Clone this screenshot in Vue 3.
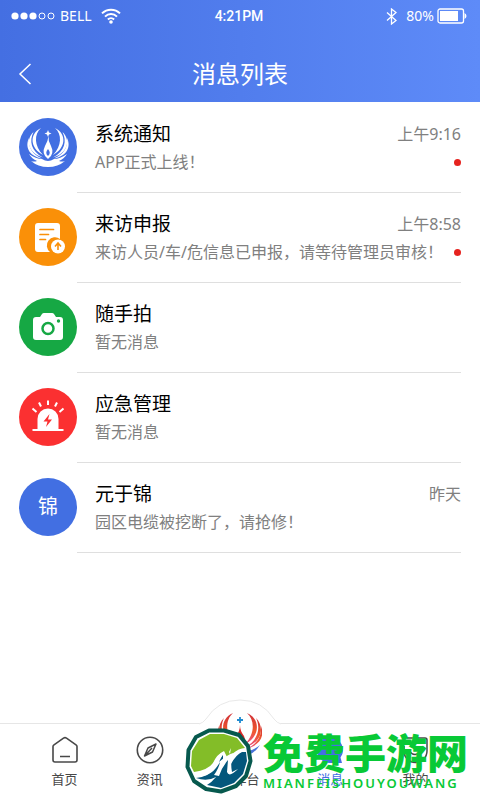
<script setup>
const messages = [
  { id: 1, icon: 'logo', tone: 'blue', title: '系统通知', preview: 'APP正式上线！', time: '上午9:16', unread: true },
  { id: 2, icon: 'report', tone: 'orange', title: '来访申报', preview: '来访人员/车/危信息已申报，请等待管理员审核！', time: '上午8:58', unread: true },
  { id: 3, icon: 'camera', tone: 'green', title: '随手拍', preview: '暂无消息', time: '', unread: false },
  { id: 4, icon: 'alarm', tone: 'red', title: '应急管理', preview: '暂无消息', time: '', unread: false },
  { id: 5, icon: '', tone: 'blue', title: '元于锦', preview: '园区电缆被挖断了，请抢修！', time: '昨天', unread: false }
]
</script>

<template>
  <div class="page">
    <header class="top">
      <div class="status">
        <div class="carrier">
          <svg class="signal" viewBox="0 0 45 8" aria-hidden="true">
            <g fill="#fff"><circle cx="4" cy="4" r="3.6" /><circle cx="13" cy="4" r="3.6" /><circle cx="22" cy="4" r="3.6" /></g>
            <g fill="none" stroke="#fff" stroke-width="1"><circle cx="31" cy="4" r="3" /><circle cx="40" cy="4" r="3" /></g>
          </svg>
          <span>BELL</span>
          <svg class="wifi" viewBox="0 0 20 16" aria-hidden="true">
            <g fill="none" stroke="#fff" stroke-width="2">
              <path d="M1 5.4a12.7 12.7 0 0 1 18 0" /><path d="M4 8.6a8.5 8.5 0 0 1 12 0" /><path d="M6.9 11.5a4.4 4.4 0 0 1 6.2 0" />
            </g>
            <circle cx="10" cy="14" r="1.8" fill="#fff" />
          </svg>
        </div>
        <span class="clock">4:21PM</span>
        <div class="power">
          <svg class="bluetooth" viewBox="0 0 11 17" aria-hidden="true">
            <path d="M1 4.500l9 8L5.500 16V1L10 4.500l-9 8" fill="none" stroke="#fff" stroke-width="1.300" />
          </svg>
          <span>80%</span>
          <svg class="battery" viewBox="0 0 30 16" aria-hidden="true">
            <rect x="1" y="1" width="25.500" height="14" rx="2" fill="none" stroke="#fff" stroke-width="1.300" />
            <rect x="3" y="3" width="18" height="10" fill="#fff" />
            <path d="M27.500 5q2 1 2 3t-2 3z" fill="#fff" />
          </svg>
        </div>
      </div>
      <div class="bar">
        <button class="back" type="button" aria-label="返回">
          <svg viewBox="0 0 14 22" aria-hidden="true"><path d="M12.500 1L2 11l10.500 10" fill="none" stroke="#fff" stroke-width="1.500" /></svg>
        </button>
        <h1>消息列表</h1>
      </div>
    </header>

    <main>
      <ul class="list">
        <li v-for="m in messages" :key="m.id" class="row">
          <div class="avatar" :class="m.tone">
            <svg v-if="m.icon === 'logo'" viewBox="0 0 58 58" aria-hidden="true">
              <g fill="#fff">
                <path d="M22 10C15 16 15 28 24 37C11 30 10 16 22 10Z" />
                <path d="M14.500 14C10 23 12 33 24 39.500C9 35 6 22 14.500 14Z" />
                <path d="M10 20C9 29 13 36 23 40.500C9 38 6 28 10 20Z" />
                <path d="M36 10C43 16 43 28 34 37C47 30 48 16 36 10Z" />
                <path d="M43.500 14C48 23 46 33 34 39.500C49 35 52 22 43.500 14Z" />
                <path d="M48 20C49 29 45 36 35 40.500C49 38 52 28 48 20Z" />
                <path d="M10 36Q17 41 23 41Q29 45 35 41Q41 41 48 36Q45 41 40 43Q43 44 46 43Q39 49 29 49Q19 49 12 43Q15 44 18 43Q13 41 10 36Z" />
                <path fill-rule="evenodd" d="M29.500 18Q29 23 32 28Q36 36 29 41Q22 36 26 28Q29 23 29.500 18ZM29 31Q25.500 35 29 38Q32.500 35 29 31Z" />
                <path d="M29 12l1 2.500 2.500 1-2.500 1-1 2.500-1-2.500-2.500-1 2.500-1z" />
              </g>
            </svg>
            <svg v-else-if="m.icon === 'report'" viewBox="0 0 58 58" aria-hidden="true">
              <path d="M19 15h19q3 0 3 3v13a8 8 0 0 0-10 13H19q-3 0-3-3V18q0-3 3-3z" fill="#fff" />
              <path d="M21 21.500h13.500M21 26.500h8.500M21 31.500h5.500" stroke="#fa9008" stroke-width="1.700" stroke-linecap="round" />
              <circle cx="39" cy="38.500" r="7" fill="#fff" />
              <path d="M39 42v-6M36 38.500l3-3.500 3 3.500" fill="none" stroke="#fa9008" stroke-width="1.600" />
            </svg>
            <svg v-else-if="m.icon === 'camera'" viewBox="0 0 58 58" aria-hidden="true">
              <path d="M17 19h4l2-3q.6-1 2-1h8q1.400 0 2 1l2 3h4q3 0 3 3v17q0 3-3 3H17q-3 0-3-3V22q0-3 3-3z" fill="#fff" />
              <circle cx="29" cy="30.500" r="5.500" fill="none" stroke="#16a844" stroke-width="2.500" />
              <circle cx="39.500" cy="23" r="1.700" fill="#16a844" />
            </svg>
            <svg v-else-if="m.icon === 'alarm'" viewBox="0 0 58 58" aria-hidden="true">
              <path d="M18.500 41V31a10.500 10.500 0 0 1 21 0v10h4q1.300 0 1.300 1t-1.300 1h-29q-1.300 0-1.300-1t1.300-1z" fill="#fff" />
              <path d="M29 12.500v4.500M20 14.500l2 4M38 14.500l-2 4M13.500 20.500l4 3.500M44.500 20.500l-4 3.500" stroke="#fff" stroke-width="2" />
              <path d="M30.500 26l-6 7.500h4l-1.500 5.500 6-7.500h-4z" fill="#fb3031" />
            </svg>
            <span v-else>锦</span>
          </div>
          <div class="body">
            <div class="line">
              <h2>{{ m.title }}</h2>
              <time v-if="m.time">{{ m.time }}</time>
            </div>
            <div class="line">
              <p>{{ m.preview }}</p>
              <i v-if="m.unread" class="dot"></i>
            </div>
          </div>
        </li>
      </ul>
    </main>

    <footer class="bottom">
      <nav class="tabs">
        <a class="tab" href="#home">
          <svg viewBox="0 0 28 28" aria-hidden="true">
            <path d="M2 10.500Q2 9.500 3 8.800L12.500 2.100Q14 1.100 15.500 2.100L25 8.800Q26 9.500 26 10.500V24q0 2-2 2H4q-2 0-2-2zM9 20.500h10" fill="none" stroke="#484848" stroke-width="1.600" />
          </svg>
          <span>首页</span>
        </a>
        <a class="tab" href="#news">
          <svg viewBox="0 0 28 28" aria-hidden="true">
            <circle cx="14" cy="14" r="12.700" fill="none" stroke="#484848" stroke-width="1.600" />
            <path d="M20 8l-3.500 8L8.500 20l3.500-8zM16 12L9 19.500" fill="none" stroke="#484848" stroke-width="1.500" stroke-linejoin="round" />
          </svg>
          <span>资讯</span>
        </a>
        <a class="tab center" href="#workbench">
          <svg class="bump" viewBox="0 0 82 44" aria-hidden="true">
            <path d="M0 25Q4 24 7 20Q19 1 41 1T75 20Q78 24 82 25V44H0z" fill="#fff" />
            <path d="M0 25Q4 24 7 20Q19 1 41 1T75 20Q78 24 82 25" fill="none" stroke="#e9e9e9" />
          </svg>
          <svg class="emblem" viewBox="0 0 44 46" aria-hidden="true">
            <defs>
              <linearGradient id="wing" x1="0" y1="0" x2="0" y2="1"><stop offset="0" stop-color="#cf2f38" /><stop offset=".6" stop-color="#f0592d" /><stop offset="1" stop-color="#e84a87" /></linearGradient>
            </defs>
            <g fill="url(#wing)">
              <path d="M15 0C7 7 7 21 17 31C2 24 1 6 15 0Z" /><path d="M6 5C1 15 4 28 17 34C0 30-3 14 6 5Z" /><path d="M1 13C0 23 5 32 17 36C2 33-3 23 1 13Z" />
              <path d="M29 0C37 7 37 21 27 31C42 24 43 6 29 0Z" /><path d="M38 5C43 15 40 28 27 34C44 30 47 14 38 5Z" /><path d="M43 13C44 23 39 32 27 36C42 33 47 23 43 13Z" />
            </g>
            <path d="M22 12Q22 18 26 23Q30 31 22 37Q14 31 18 23Q22 18 22 12Z" fill="#dd2725" />
            <path d="M22 4v6M19 7h6" stroke="#218bd0" stroke-width="1.800" />
            <path d="M2 32Q14 40 22 39Q34 39 42 32Q36 41 30 42Q22 47 14 42Q7 40 2 32Z" fill="#4874d8" />
          </svg>
          <span>工作台</span>
        </a>
        <a class="tab active" href="#messages" aria-current="page">
          <svg viewBox="0 0 28 28" aria-hidden="true">
            <path d="M14 1a13 13 0 0 1 10.500 20.500l1.500 5.500H14A13 13 0 0 1 14 1z" fill="#456fe2" />
          </svg>
          <span>消息</span>
        </a>
        <a class="tab" href="#mine">
          <svg viewBox="0 0 28 28" aria-hidden="true">
            <path d="M6 2h18q2 0 2 2v11a11.500 11.500 0 0 1-23 0V10M9 16q5 5 10 0" fill="none" stroke="#484848" stroke-width="1.500" />
          </svg>
          <span>我的</span>
        </a>
      </nav>
      <div class="mark">
        <svg class="badge" viewBox="0 0 68 66" aria-hidden="true">
          <path d="M24 2.500L39 2.500L54 7L63 18L65.500 33L61 48L51 58L36 63.500L21 61L9 53L2.500 39L3.500 22L11 9Z" fill="#fff" stroke="#07594e" stroke-width="4" stroke-linejoin="round" />
          <path d="M25 6L39 6L52 10L60 20Q54 20 47 26L43 31L39 23Q32 26 28 35Q23 42 9 44L6 38L7 23L14 12Z" fill="#83bd28" />
          <path d="M11 50Q24 49 31 38Q34 31 38 27L38 33L33 44Q41 32 46 28L44 40Q50 27 57 24L61 24L62 33L58 46L49 55L36 60L22 57Q27 54 31 49Q22 54 11 50Z" fill="#04577c" />
          <path d="M9 47Q22 46 29 34Q33 27 38 24Q37 29 34 34Q42 27 48 25Q45 33 47 44L53 41Q44 50 42 44L43 32Q37 39 34 48L29 47Q34 40 35 34Q25 52 9 47Z" fill="#fff" />
          <path d="M44 24l2-4-1 6z" fill="#fff" />
        </svg>
        <div class="words">
          <strong>免费手游网</strong>
          <small>MIANFEISHOUYOUWANG</small>
        </div>
      </div>
    </footer>
  </div>
</template>

<style>
body {
  margin: 0;
  background: #fff;
}
</style>

<style scoped>
.page {
  display: flex;
  flex-direction: column;
  min-height: 100vh;
  overflow: hidden;
  font-family: "Noto Sans", "Noto Sans CJK SC", sans-serif;
  color: #000;
}
svg {
  display: block;
  flex: none;
}
h1, h2, p, ul {
  margin: 0;
  padding: 0;
  font-weight: 400;
}
.top {
  background: linear-gradient(90deg, #446fe2, #5e8bf8);
  color: #fff;
}
.status {
  display: grid;
  grid-template-columns: 1fr auto 1fr;
  align-items: center;
  height: 32px;
  padding: 0 13px 0 11px;
  font-size: 14px;
  line-height: 20px;
}
.carrier, .power {
  display: flex;
  align-items: center;
}
.carrier {
  gap: 4px;
}
.signal {
  width: 45px;
  height: 8px;
}
.wifi {
  width: 20px;
  height: 16px;
  margin-left: 5px;
}
.clock {
  font-family: Roboto, sans-serif;
  font-weight: 500;
}
.power {
  justify-content: flex-end;
  gap: 3px;
}
.bluetooth {
  width: 11px;
  height: 17px;
  margin-right: 6px;
}
.battery {
  width: 30px;
  height: 16px;
}
.bar {
  display: grid;
  grid-template-columns: 48px 1fr 48px;
  align-items: center;
  padding: 24px 0 10px;
}
.bar h1 {
  font-size: 24px;
  line-height: 36px;
  text-align: center;
}
.back {
  padding: 0 0 0 18px;
  border: 0;
  background: none;
  cursor: pointer;
}
.back svg {
  width: 14px;
  height: 22px;
}
.list {
  padding-top: 1px;
  list-style: none;
}
.row {
  display: flex;
  box-sizing: border-box;
  height: 90px;
  padding: 0 19px;
}
.avatar {
  display: flex;
  flex: none;
  align-items: center;
  justify-content: center;
  width: 58px;
  height: 58px;
  margin-top: 15px;
  border-radius: 50%;
  color: #fff;
  font-size: 20px;
  line-height: 28px;
}
.avatar svg {
  width: 58px;
  height: 58px;
}
.blue { background: #426fe2; }
.orange { background: #fa9008; }
.green { background: #16a844; }
.red { background: #fb3031; }
.body {
  flex: 1;
  min-width: 0;
  padding: 17px 0 0 18px;
  border-bottom: 1px solid #dfdfdf;
}
.line {
  display: flex;
  align-items: center;
  justify-content: space-between;
  height: 28px;
  white-space: nowrap;
}
h2 {
  font-size: 19px;
  line-height: 28px;
}
time, p {
  color: #808080;
  font-size: 16px;
  line-height: 28px;
}
.dot {
  width: 7px;
  height: 7px;
  border-radius: 50%;
  background: #e6231f;
}
.bottom {
  position: relative;
  margin-top: auto;
}
.tabs {
  display: grid;
  grid-template-columns: 85fr 85fr 95fr 85fr 85fr;
  height: 76px;
  padding: 0 22px;
  border-top: 1px solid #e6e6e6;
}
.tab {
  position: relative;
  display: flex;
  flex-direction: column;
  align-items: center;
  gap: 5px;
  padding-top: 12px;
  color: #484848;
  font-size: 13px;
  line-height: 20px;
  text-decoration: none;
}
.tab > svg {
  width: 28px;
  height: 28px;
}
.tab.active {
  color: #456fe2;
}
.tab.center {
  justify-content: flex-end;
  padding: 0 0 11px;
}
.tab .bump {
  position: absolute;
  top: -25px;
  width: 82px;
  height: 44px;
}
.tab .emblem {
  position: absolute;
  top: -11px;
  width: 44px;
  height: 46px;
}
.mark {
  position: absolute;
  right: 12px;
  bottom: 6px;
  display: flex;
  align-items: center;
  gap: 10px;
}
.badge {
  width: 68px;
  height: 66px;
}
.words {
  display: flex;
  flex-direction: column;
  color: #08c936;
  white-space: nowrap;
}
.words strong {
  font-family: "Noto Sans CJK SC", sans-serif;
  font-size: 41px;
  font-weight: 900;
  line-height: 44px;
}
.words small {
  font-family: "Noto Sans", sans-serif;
  font-size: 13px;
  font-weight: 600;
  line-height: 20px;
  letter-spacing: 2px;
}
</style>
